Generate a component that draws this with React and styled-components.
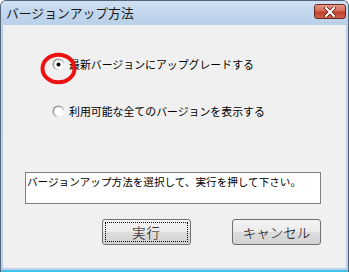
import React from "react";
import styled, { createGlobalStyle } from "styled-components";

const Global = createGlobalStyle`
  html, body { margin: 0; padding: 0; background: #ffffff; }
  body { font-family: "Noto Sans CJK JP", "Liberation Sans", sans-serif; }
`;

const Window = styled.div`
  width: 349px;
  height: 272px;
  box-sizing: border-box;
  display: flex;
  flex-direction: column;
  background: linear-gradient(180deg, #c9dcef 0%, #b9d0e8 12%, #bcd2ea 100%);
  border: 1px solid #55657a;
  border-bottom: none;
  border-radius: 6px 6px 0 0;
  overflow: hidden;
`;

const TitleBar = styled.div`
  height: 24px;
  flex: none;
  display: flex;
  align-items: center;
  justify-content: space-between;
  padding: 0 2px 0 5px;
  background: linear-gradient(180deg, #d0e0f1 0%, #c3d7ed 45%, #b9d0e9 100%);
`;

const Title = styled.span`
  font-size: 12.8px;
  color: #1a1a1a;
  line-height: 1;
`;

const CloseBtn = styled.div`
  width: 32px;
  height: 15px;
  margin-top: -3px;
  box-sizing: border-box;
  border: 1px solid #6d2a22;
  border-radius: 3px;
  background: linear-gradient(180deg, #e6998a 0%, #d66a55 45%, #c0412c 55%, #cc624a 100%);
  display: flex;
  align-items: center;
  justify-content: center;
`;

const Frame = styled.div`
  flex: 1;
  display: flex;
  flex-direction: column;
  padding: 0 2px 2px 2px;
  border-bottom: 2px solid #3fc3e6;
`;

const Client = styled.div`
  flex: 1;
  background: #f0f0f0;
  border: 1px solid #e6edf5;
  border-top: none;
  display: flex;
  flex-direction: column;
  padding: 31px 0 0 0;
`;

const RadioRow = styled.div`
  display: flex;
  align-items: center;
  height: 16px;
  padding-left: 48px;
  gap: 4px;
  margin-bottom: ${(p) => p.$mb || 0}px;
`;

const RadioWrap = styled.div`
  position: relative;
  width: 13px;
  height: 13px;
  flex: none;
  & > svg { display: block; }
`;

const Annotation = styled.svg`
  position: absolute;
  left: -12px;
  top: -6px;
  width: 37px;
  height: 33px;
  overflow: visible;
  pointer-events: none;
`;

const Label = styled.span`
  font-size: 10.9px;
  color: #000;
  line-height: 1;
  white-space: nowrap;
`;

const MessageBox = styled.div`
  margin: 0 0 15px 21px;
  width: 296px;
  height: 32px;
  box-sizing: border-box;
  background: #ffffff;
  border: 1px solid #7f7f7f;
  padding: 3px 1px;
  font-size: 10.6px;
  color: #000;
  line-height: 1.1;
  white-space: nowrap;
`;

const ButtonRow = styled.div`
  display: flex;
  gap: 41px;
  padding-left: 98px;
`;

const Button = styled.div`
  width: 89px;
  height: 26px;
  box-sizing: border-box;
  border: 1px solid #6f6f6f;
  border-radius: 3px;
  background: linear-gradient(180deg, #f4f4f4 0%, #ebebeb 48%, #dddddd 52%, #d2d2d2 100%);
  display: flex;
  align-items: center;
  justify-content: center;
  font-size: 13.5px;
  font-weight: 300;
  color: #000;
  position: relative;
  letter-spacing: ${(p) => (p.$spaced ? "0" : "1px")};
  ${(p) =>
    p.$focused &&
    `
    &::after {
      content: "";
      position: absolute;
      inset: 2px;
      border: 1px dotted #000;
    }
  `}
`;

function Radio({ checked }) {
  const id = checked ? "rg1" : "rg2";
  return (
    <svg width="13" height="13" viewBox="0 0 13 13">
      <defs>
        <linearGradient id={id} x1="0" y1="0" x2="1" y2="1">
          <stop offset="0" stopColor="#7a7a7a" />
          <stop offset="0.5" stopColor="#b4b4b4" />
          <stop offset="0.75" stopColor="#f4f4f4" />
          <stop offset="1" stopColor="#ffffff" />
        </linearGradient>
      </defs>
      <circle cx="6.5" cy="6.5" r="6" fill={`url(#${id})`} />
      <circle cx="6.5" cy="6.5" r="4.5" fill="#ffffff" />
      {checked && <circle cx="6.5" cy="6.5" r="2" fill="#000" />}
    </svg>
  );
}

export default function App() {
  return (
    <>
      <Global />
      <Window>
        <TitleBar>
          <Title>バージョンアップ方法</Title>
          <CloseBtn>
            <svg width="14" height="10" viewBox="0 0 14 10">
              <path d="M3 1 L11 9 M11 1 L3 9" stroke="#5a2018" strokeWidth="3.6" strokeLinecap="square" />
              <path d="M3 1 L11 9 M11 1 L3 9" stroke="#ffffff" strokeWidth="2" strokeLinecap="square" />
            </svg>
          </CloseBtn>
        </TitleBar>
        <Frame>
          <Client>
            <RadioRow $mb={31}>
              <RadioWrap>
                <Radio checked />
                <Annotation viewBox="0 0 37 33">
                  <ellipse cx="18.5" cy="16.5" rx="16" ry="13.8" fill="none" stroke="#ee1111" strokeWidth="4" />
                </Annotation>
              </RadioWrap>
              <Label>最新バージョンにアップグレードする</Label>
            </RadioRow>
            <RadioRow $mb={53}>
              <RadioWrap>
                <Radio />
              </RadioWrap>
              <Label>利用可能な全てのバージョンを表示する</Label>
            </RadioRow>
            <MessageBox>バージョンアップ方法を選択して、実行を押して下さい。</MessageBox>
            <ButtonRow>
              <Button $focused>実行</Button>
              <Button $spaced>キャンセル</Button>
            </ButtonRow>
          </Client>
        </Frame>
      </Window>
    </>
  );
}
